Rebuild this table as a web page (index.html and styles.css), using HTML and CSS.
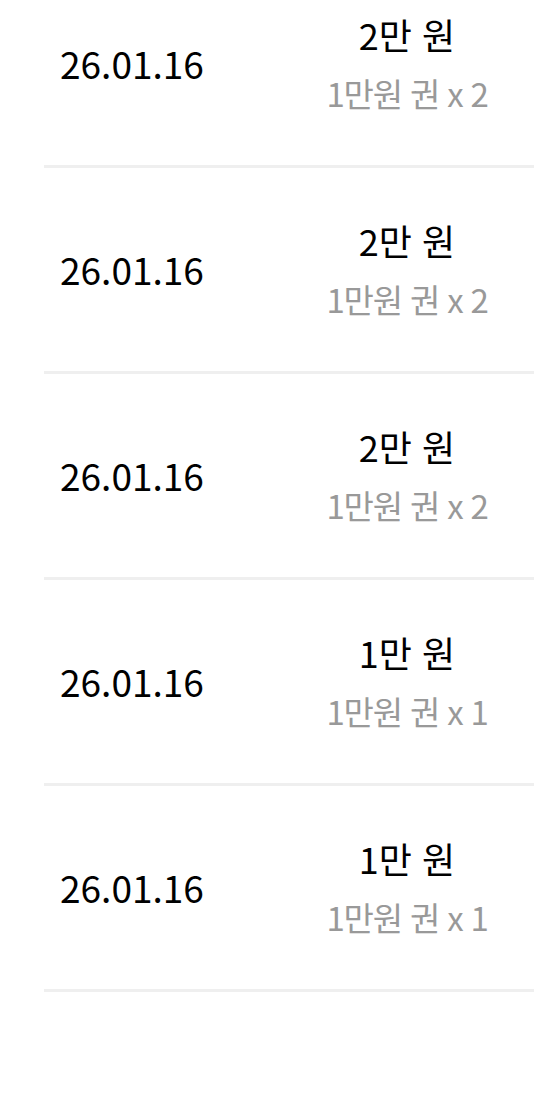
FILE: index.html
```html
<!DOCTYPE html>
<html lang="ko">
<head>
  <meta charset="UTF-8">
  <meta name="viewport" content="width=device-width, initial-scale=1.0">
  <title>구매 내역</title>
  <link rel="stylesheet" href="styles.css">
</head>
<body>
  <ul class="history">
    <li class="item">
      <span class="date">26.01.16</span>
      <div class="amount">
        <span class="total">2만 원</span>
        <span class="detail">1만원 권 x 2</span>
      </div>
    </li>
    <li class="item">
      <span class="date">26.01.16</span>
      <div class="amount">
        <span class="total">2만 원</span>
        <span class="detail">1만원 권 x 2</span>
      </div>
    </li>
    <li class="item">
      <span class="date">26.01.16</span>
      <div class="amount">
        <span class="total">2만 원</span>
        <span class="detail">1만원 권 x 2</span>
      </div>
    </li>
    <li class="item">
      <span class="date">26.01.16</span>
      <div class="amount">
        <span class="total">1만 원</span>
        <span class="detail">1만원 권 x 1</span>
      </div>
    </li>
    <li class="item">
      <span class="date">26.01.16</span>
      <div class="amount">
        <span class="total">1만 원</span>
        <span class="detail">1만원 권 x 1</span>
      </div>
    </li>
  </ul>
</body>
</html>
```

FILE: styles.css
```css
body {
  font-family: "Noto Sans CJK KR", "Noto Sans", sans-serif;
  margin: 0;
  padding: 0;
  background: #fff;
  color: #000;
  overflow: hidden;
}
.history {
  list-style: none;
  margin: -38px 0 0 44px;
  padding: 0;
}
.item {
  display: flex;
  align-items: center;
  height: 203px;
  border-bottom: 3px solid #efefef;
}
.date {
  flex: 0 0 auto;
  width: 184px;
  padding-left: 16px;
  font-size: 37px;
  line-height: 1;
}
.amount {
  flex: 1;
  display: flex;
  flex-direction: column;
  align-items: center;
  padding-left: 36px;
}
.total {
  font-size: 36px;
  line-height: 57px;
}
.detail {
  margin-top: 2px;
  font-size: 33px;
  line-height: 57px;
  letter-spacing: -1.2px;
  color: #999;
}
```
